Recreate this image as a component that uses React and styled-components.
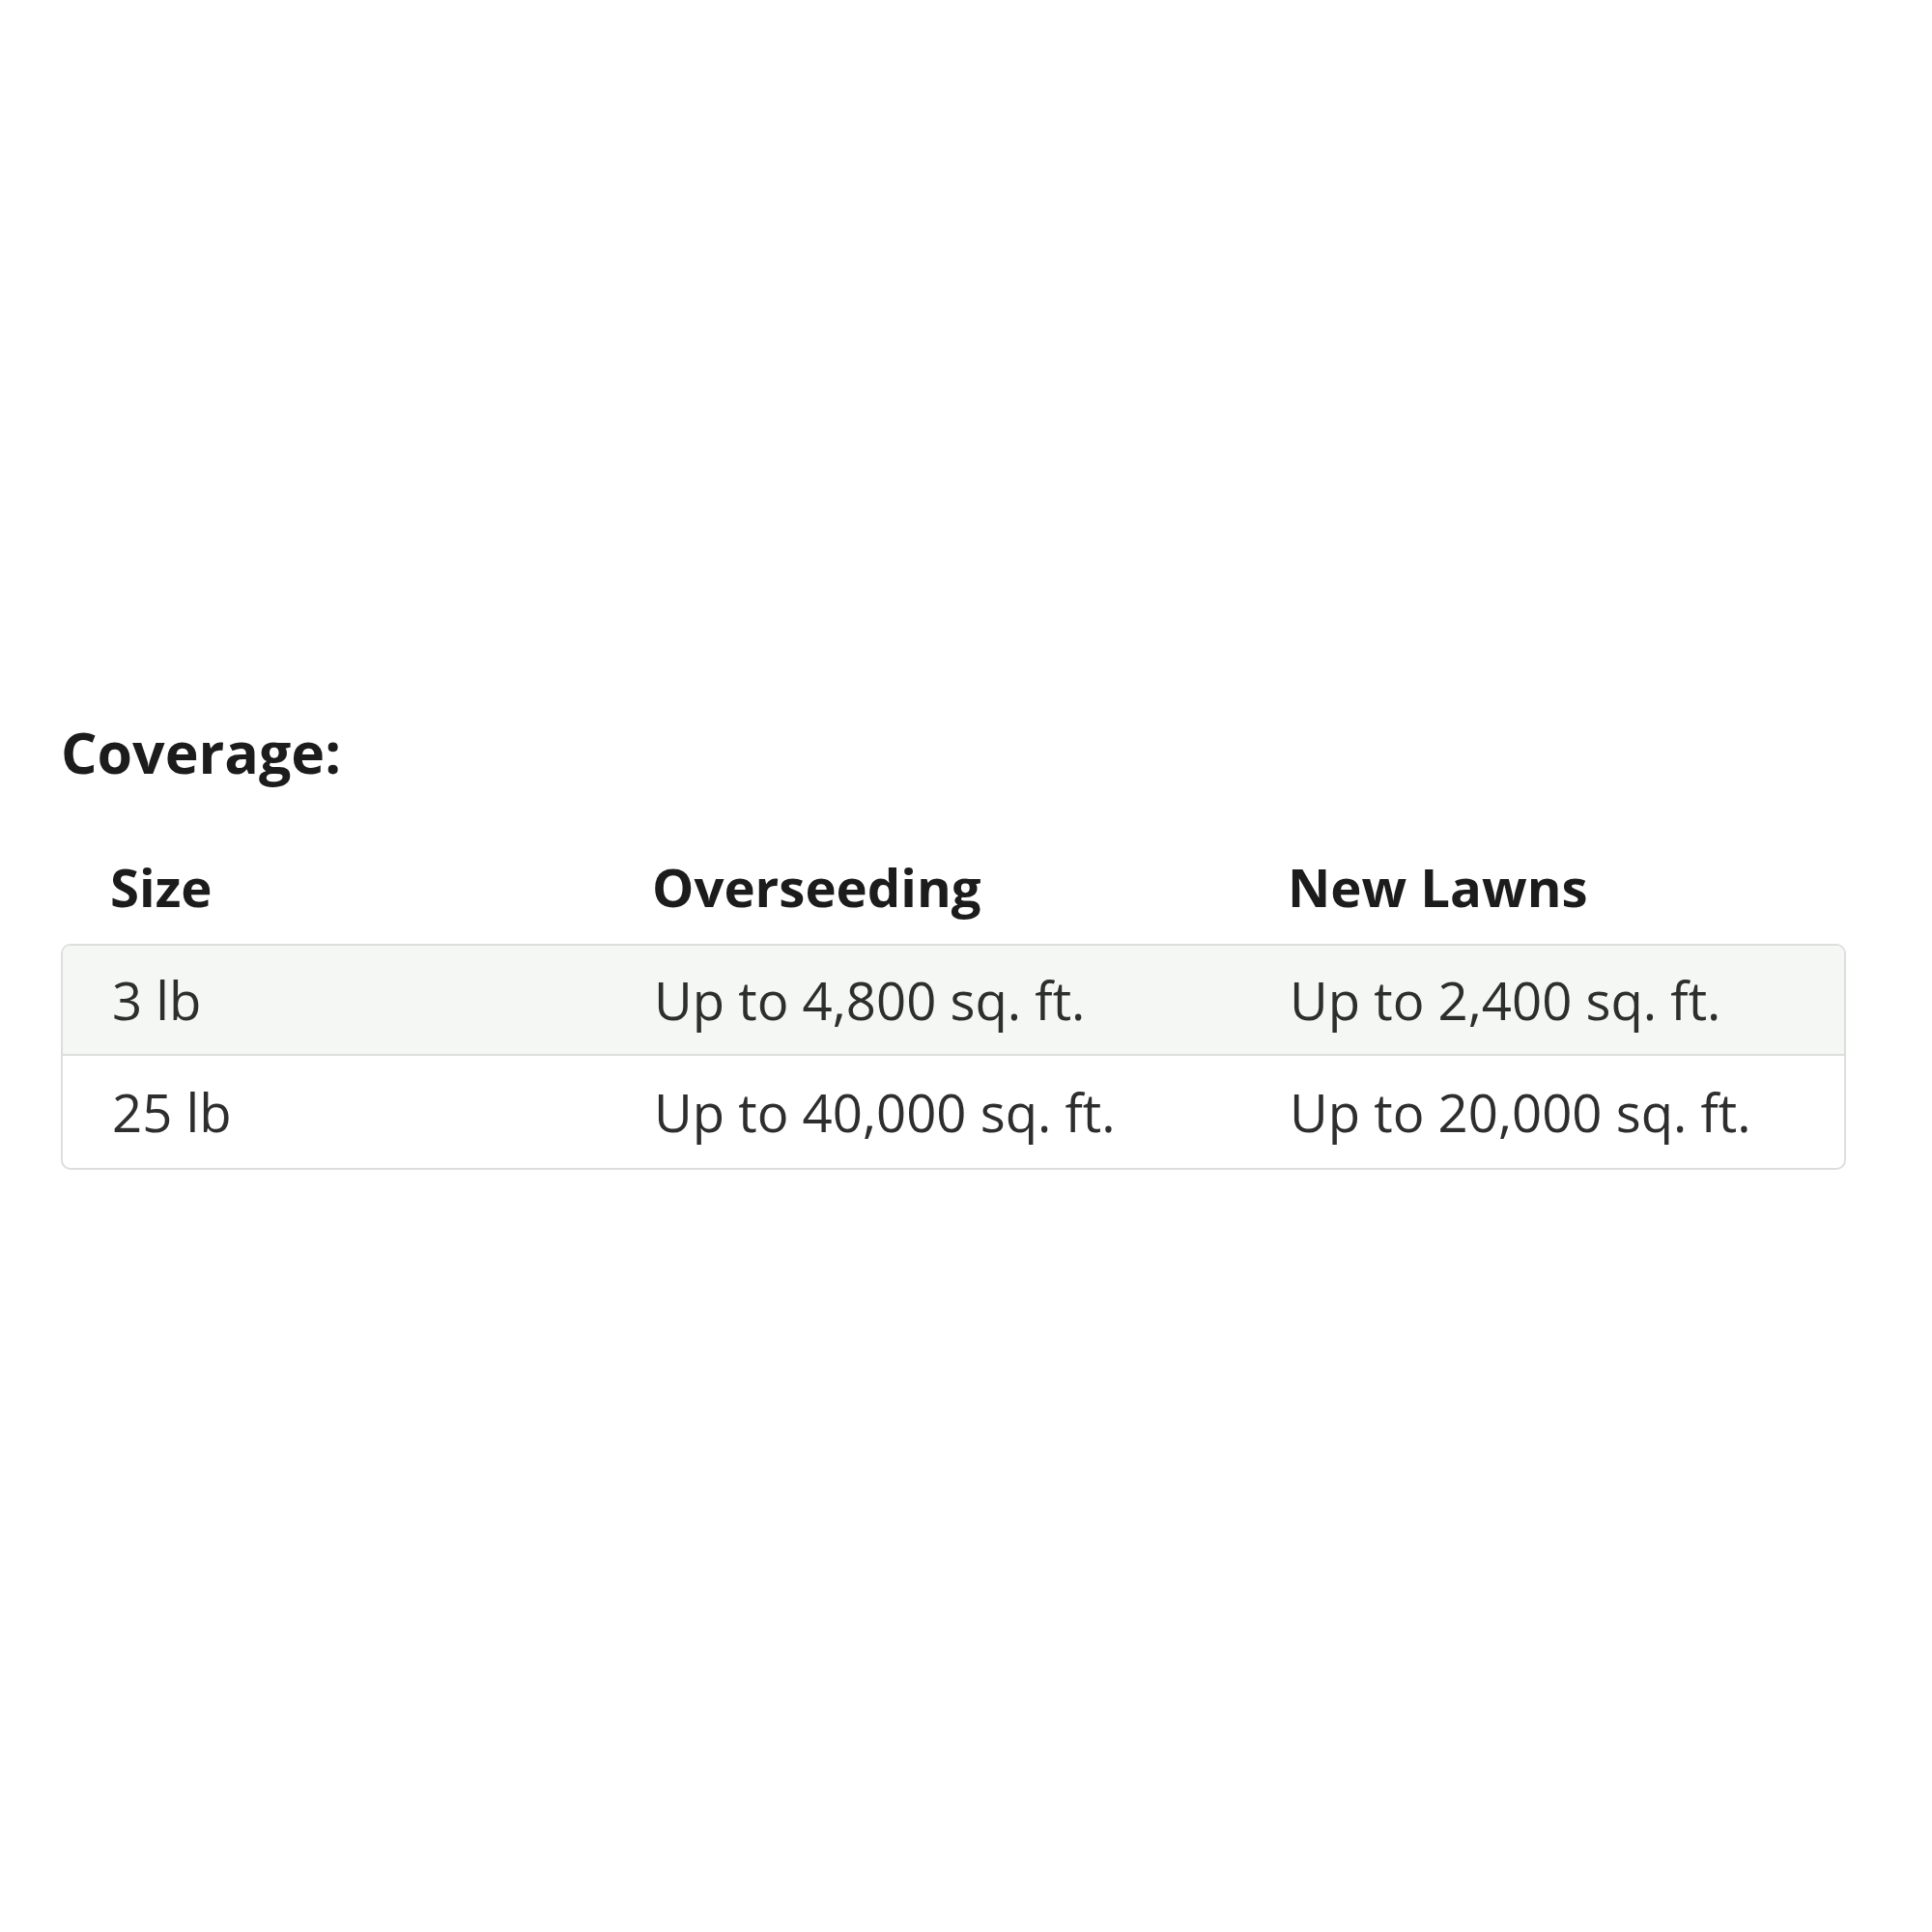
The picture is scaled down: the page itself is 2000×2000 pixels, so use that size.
import styled, { createGlobalStyle } from 'styled-components';

const GlobalStyle = createGlobalStyle`
  body {
    margin: 0;
    background: #ffffff;
    font-family: "Open Sans", "Liberation Sans", sans-serif;
    color: #2b2b2b;
  }
`;

const SCPage = styled.div`
  padding: 740px 89px 0 63px;
`;

const SCTitle = styled.h2`
  margin: 0 0 43px;
  font-size: 59px;
  font-weight: 700;
  line-height: 76px;
  color: #1c1c1c;
`;

const SCRow = styled.div`
  display: grid;
  grid-template-columns: 561px 658px 1fr;
  align-items: center;
  height: ${ ({ $height }) => $height }px;
  background: ${ ({ $shade }) => ($shade ? '#f4f7f4' : 'transparent') };
  border-top: ${ ({ $divider }) => ($divider ? '2px solid #dcdedc' : 'none') };
`;

const SCCell = styled.div`
  padding-left: 51px;
  font-size: ${ ({ $head }) => ($head ? '54.5px' : '54.5px') };
  font-weight: ${ ({ $head }) => ($head ? 700 : 400) };
  color: ${ ({ $head }) => ($head ? '#1c1c1c' : '#2e2e2e') };
  white-space: nowrap;
`;

const SCBox = styled.div`
  border: 2px solid #dcdedc;
  border-radius: 10px;
  overflow: hidden;
`;

const rows = [
  ['3 lb', 'Up to 4,800 sq. ft.', 'Up to 2,400 sq. ft.'],
  ['25 lb', 'Up to 40,000 sq. ft.', 'Up to 20,000 sq. ft.'],
];

const App = () => {
  return (
    <>
      <GlobalStyle />
      <SCPage>
        <SCTitle>Coverage:</SCTitle>
        <SCRow $height={ 118 }>
          <SCCell $head>Size</SCCell>
          <SCCell $head>Overseeding</SCCell>
          <SCCell $head>New Lawns</SCCell>
        </SCRow>
        <SCBox>
          { rows.map((row, i) => (
            <SCRow key={ row[0] } $height={ i === 0 ? 112 : 116 } $shade={ i === 0 } $divider={ i > 0 }>
              { row.map((cell) => (
                <SCCell key={ cell }>{ cell }</SCCell>
              )) }
            </SCRow>
          )) }
        </SCBox>
      </SCPage>
    </>
  );
};

export default App;
